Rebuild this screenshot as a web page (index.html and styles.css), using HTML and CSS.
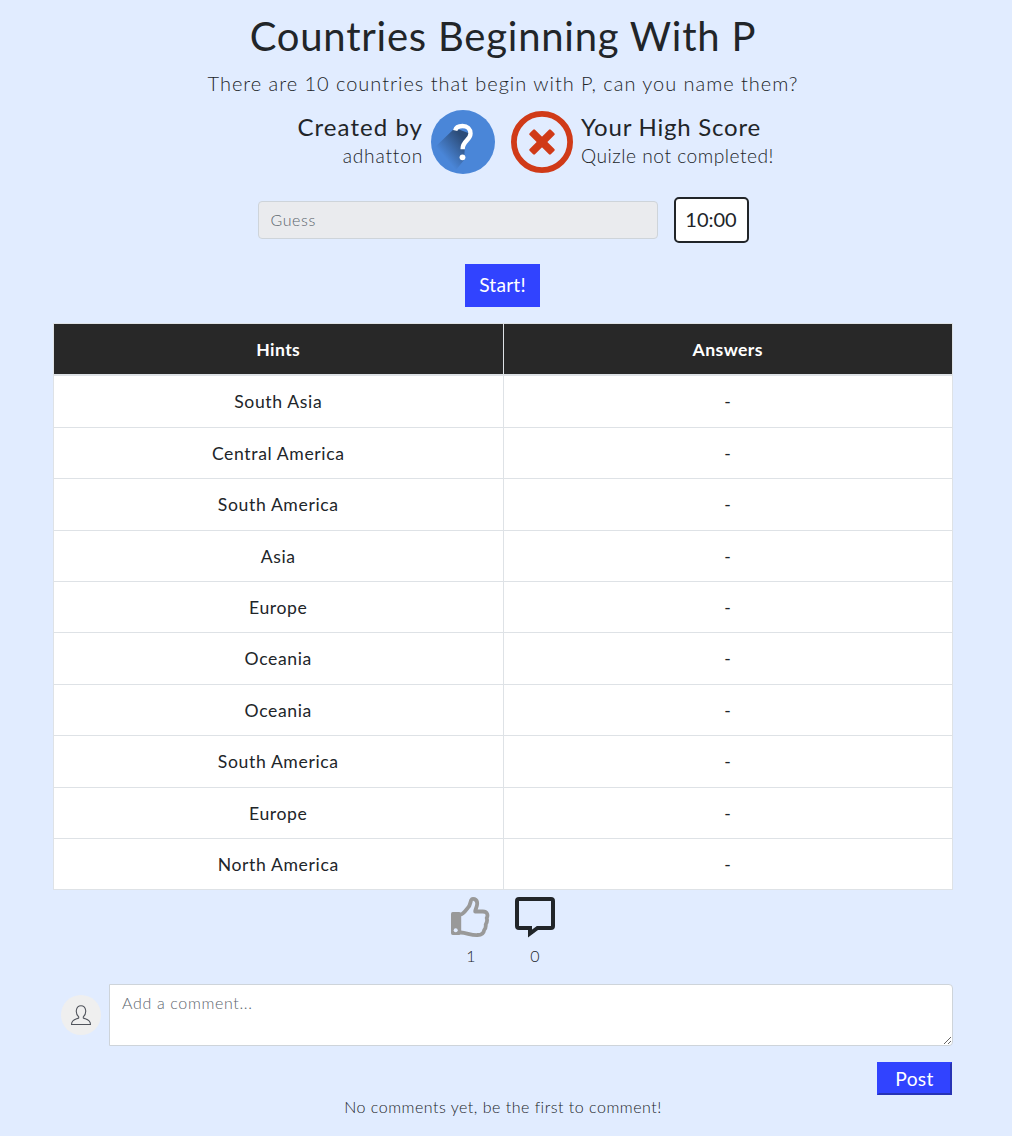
FILE: index.html
```html
<!DOCTYPE html>
<html lang="en">
<head>
<meta charset="utf-8">
<title>Countries Beginning With P</title>
<link rel="stylesheet" href="styles.css">
</head>
<body>
<main class="quiz">
  <h1 class="title">Countries Beginning With P</h1>
  <p class="lead">There are 10 countries that begin with P, can you name them?</p>
  <section class="meta">
    <div class="meta-side meta-author">
      <div class="meta-text"><h2 class="created">Created by</h2><p class="author">adhatton</p></div>
      <svg class="badge" viewBox="0 0 64 64">
        <defs><linearGradient id="shade" gradientUnits="userSpaceOnUse" x1="31" y1="27" x2="11" y2="44"><stop offset="0" stop-color="#2c4c78"/><stop offset="1" stop-color="#2c4c78" stop-opacity="0"/></linearGradient></defs>
        <circle cx="32" cy="32" r="32" fill="#4a86d8"/>
        <path d="M24 18 L2 39 Q8 55 25 60 L33 50 L34 35 L40 24 Z" fill="url(#shade)"/>
        <path d="M24.200 20.500 C25 17 28 16 31.500 16 C36.500 16 39.500 19 39.500 23.500 C39.500 30 31.700 31 31.700 38.500 V39.300" fill="none" stroke="#fff" stroke-width="4.400" stroke-linecap="butt"/>
        <circle cx="31.500" cy="47.300" r="2.900" fill="#fff"/>
      </svg>
    </div>
    <div class="meta-side">
      <svg class="badge" viewBox="0 0 64 64">
        <circle cx="32" cy="32" r="28.100" fill="none" stroke="#d03a18" stroke-width="5.800"/>
        <g transform="rotate(45 32 32)" fill="#d03a18">
          <rect x="17" y="28.200" width="30" height="7.600" rx="1.300"/>
          <rect x="28.200" y="17" width="7.600" height="30" rx="1.300"/>
        </g>
      </svg>
      <div class="meta-text"><h2 class="score">Your High Score</h2><p class="status">Quizle not completed!</p></div>
    </div>
  </section>
  <div class="play">
    <input class="guess" type="text" placeholder="Guess" disabled>
    <div class="timer">10:00</div>
  </div>
  <button class="start" type="button">Start!</button>
  <table class="answers">
    <thead><tr><th>Hints</th><th>Answers</th></tr></thead>
    <tbody>
      <tr><td>South Asia</td><td>-</td></tr>
      <tr><td>Central America</td><td>-</td></tr>
      <tr><td>South America</td><td>-</td></tr>
      <tr><td>Asia</td><td>-</td></tr>
      <tr><td>Europe</td><td>-</td></tr>
      <tr><td>Oceania</td><td>-</td></tr>
      <tr><td>Oceania</td><td>-</td></tr>
      <tr><td>South America</td><td>-</td></tr>
      <tr><td>Europe</td><td>-</td></tr>
      <tr><td>North America</td><td>-</td></tr>
    </tbody>
  </table>
  <div class="reactions">
    <div class="reaction">
      <svg width="40" height="42" viewBox="1.300 0 40 42">
        <path d="M3 16 H9.500 Q11.500 16 11.500 18 V37 Q11.500 39 9.500 39 H3 Q1.300 39 1.300 37 V18 Q1.300 16 3 16 Z" fill="#999"/>
        <circle cx="6" cy="34.300" r="2" fill="#e1ecff"/>
        <path d="M11 18.500 C14 18 16 14.500 18 12 C21 9 20.500 6 21.500 4 C22.500 2 27.500 2.500 27.500 7.500 C27.500 11 25.500 13 25.500 15.500 H33 C38.500 15.500 38.200 20 37 22 C37.800 24.500 37 27 36 28.500 C36.300 31 35.500 33 34.500 34 C34 37.500 31 39 28 39 C22 39.500 17 36.800 11 36.500" fill="none" stroke="#999" stroke-width="3.800" stroke-linejoin="round"/>
      </svg>
      <span>1</span>
    </div>
    <div class="reaction">
      <svg width="40" height="42" viewBox="0 0 40 42">
        <path d="M4 3 H36 Q38 3 38 5 V30 Q38 32 36 32 H22.500 L15 37.500 V32 H4 Q2 32 2 30 V5 Q2 3 4 3 Z" fill="none" stroke="#212529" stroke-width="4"/>
      </svg>
      <span>0</span>
    </div>
  </div>
  <form class="comment">
    <svg class="avatar" viewBox="0 0 40 40">
      <circle cx="20" cy="20" r="20" fill="#efefef"/>
      <path d="M17.700 21.800 V23 C15.500 24.300 10.500 24.200 10.500 29.500 H29.500 C29.500 24.200 24.500 24.300 22.300 23 V21.800 C26 18.500 25.500 10.700 20 10.700 C14.500 10.700 14 18.500 17.700 21.800 Z" fill="none" stroke="#50545c" stroke-width="1.100" stroke-linejoin="round"/>
    </svg>
    <textarea class="comment-box" placeholder="Add a comment..."></textarea>
  </form>
  <button class="post" type="button">Post</button>
  <p class="empty">No comments yet, be the first to comment!</p>
</main>
</body>
</html>
```
FILE: styles.css
```css
* { box-sizing: border-box; }
body {
  margin: 0;
  background: #e1ecff;
  color: #212529;
  font-family: Lato, "Open Sans", sans-serif;
  font-size: 16px;
  line-height: 1.5;
}
h1, h2, p { margin: 0; font-weight: 400; white-space: nowrap; }
button, input, textarea { font-family: inherit; }
.quiz {
  width: 900px;
  margin-left: 53px;
  padding-top: 12px;
  display: flex;
  flex-direction: column;
  align-items: center;
}
.title { font-size: 40px; line-height: 48px; letter-spacing: .77px; }
.lead { margin-top: 8px; font-size: 20px; line-height: 30px; font-weight: 300; letter-spacing: .97px; }
.meta { width: 100%; margin-top: 12px; display: grid; grid-template-columns: 1fr 1fr; gap: 16px; }
.meta-side { display: flex; gap: 8px; }
.meta-author { justify-content: flex-end; text-align: right; }
.badge { width: 64px; height: 64px; flex: none; }
.meta-side + .meta-side { gap: 7px; }
.meta-side + .meta-side .badge { margin-left: -1px; }
.meta-text { padding-top: 2px; }
.created, .score { font-size: 24px; line-height: 29px; }
.created { letter-spacing: 1.050px; }
.score { letter-spacing: .77px; }
.author, .status { font-size: 19.2px; line-height: 29px; font-weight: 300; letter-spacing: .5px; }
.author { letter-spacing: .8px; }
.play { margin-top: 23px; display: flex; align-items: center; gap: 16px; }
.guess {
  width: 400px;
  height: 38px;
  padding: 5px 12px 7px;
  border: 1px solid #ced4da;
  border-radius: 4px;
  background: #eaebee;
  font-size: 16px;
  font-weight: 300;
  letter-spacing: .6px;
}
.guess::placeholder, .comment-box::placeholder { color: #5c656d; opacity: 1; }
.timer {
  width: 75px;
  height: 46px;
  border: 2px solid #212529;
  border-radius: 5px;
  background: #fff;
  font-size: 20px;
  line-height: 40px;
  text-align: center;
}
.start {
  width: 75px;
  height: 43px;
  margin: 21px 1px 0 0;
  padding: 0 0 2px;
  border: 0;
  background: #3143ff;
  color: #fff;
  font-size: 19.2px;
  letter-spacing: .2px;
}
.answers {
  width: 900px;
  margin-top: 16px;
  table-layout: fixed;
  border-collapse: collapse;
  border: 1px solid #dee2e6;
  background: #fff;
  font-size: 17.6px;
  text-align: center;
  letter-spacing: .62px;
}
.answers th, .answers td { padding: 13px 12px 11px; border: 1px solid #dee2e6; }
.answers thead th { border-bottom-width: 2px; background: #282828; color: #fff; font-weight: 700; letter-spacing: .4px; }
.reactions { margin-top: 6px; display: flex; gap: 24px; }
.reaction { display: flex; flex-direction: column; align-items: center; font-weight: 300; }
.reaction svg { display: block; }
.reaction span { margin-top: 6px; line-height: 24px; }
.comment { width: 100%; margin-top: 16px; padding-left: 8px; display: flex; align-items: center; gap: 8px; }
.avatar { width: 40px; height: 40px; flex: none; }
.comment-box {
  flex: 1;
  height: 62px;
  padding: 6px 12px;
  border: 1px solid #ced4da;
  border-radius: 0 4px 4px 0;
  background: #fff;
  font-size: 16px;
  font-weight: 300;
  line-height: 24px;
  letter-spacing: .65px;
}
.post {
  align-self: flex-end;
  width: 75px;
  height: 33px;
  margin: 16px 1px 0 0;
  padding: 0 0 1px;
  border: 2px solid;
  border-color: #3143ff #2733b5 #2733b5 #3143ff;
  background: #3143ff;
  color: #fff;
  font-size: 19.2px;
  line-height: 27px;
  letter-spacing: .3px;
}
.empty { font-size: 16px; line-height: 24px; font-weight: 300; letter-spacing: .5px; }
```
